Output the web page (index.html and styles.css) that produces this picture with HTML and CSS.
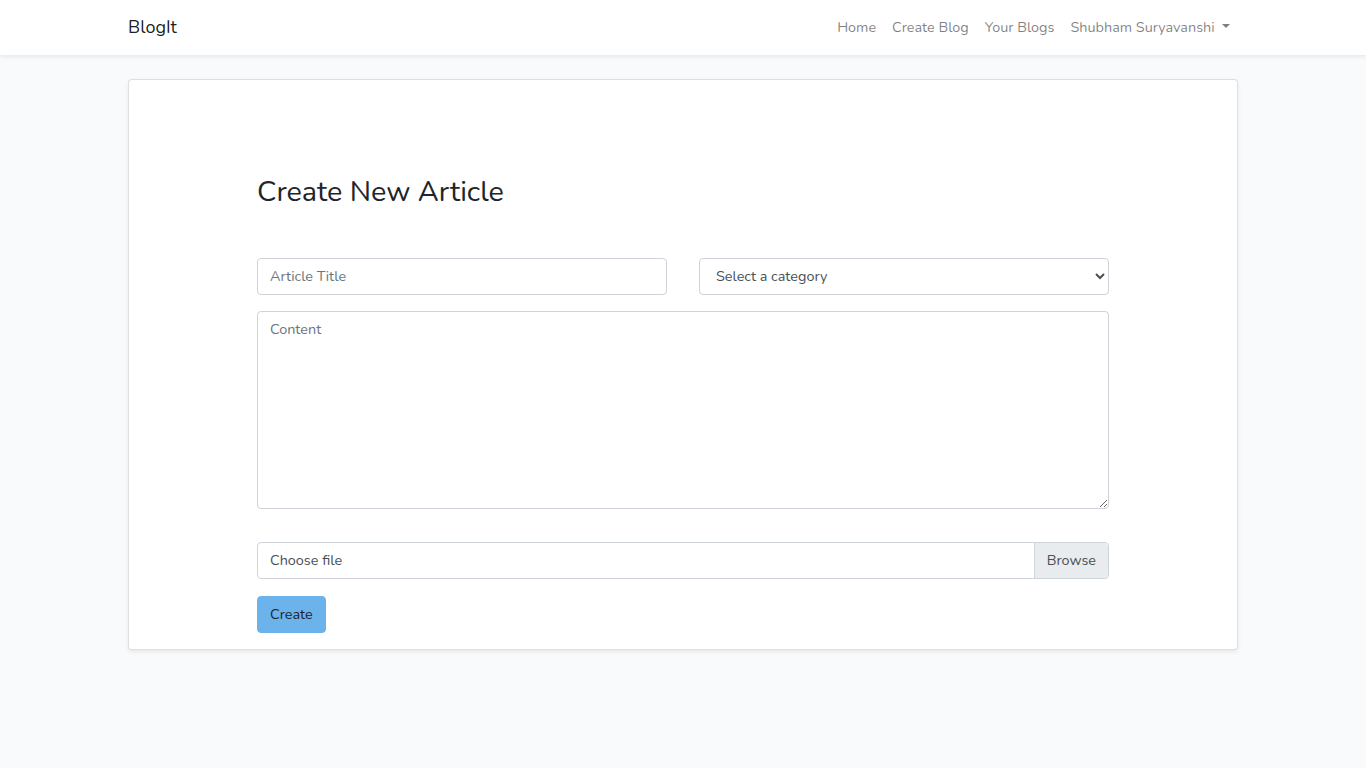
FILE: index.html
```html
<!DOCTYPE html>
<html lang="en">
<head>
<meta charset="utf-8">
<title>BlogIt</title>
<link rel="stylesheet" href="styles.css">
</head>
<body>
<nav class="navbar">
  <div class="container nav-inner">
    <a class="brand" href="#">BlogIt</a>
    <ul class="nav-links">
      <li><a href="#">Home</a></li>
      <li><a href="#">Create Blog</a></li>
      <li><a href="#">Your Blogs</a></li>
      <li><a href="#" class="dropdown-toggle">Shubham Suryavanshi <span class="caret"></span></a></li>
    </ul>
  </div>
</nav>
<main class="main">
  <div class="container">
    <div class="card">
      <div class="card-body">
        <h2 class="title">Create New Article</h2>
        <form class="form">
          <div class="form-row">
            <input class="form-control" type="text" placeholder="Article Title">
            <select class="form-control select">
              <option>Select a category</option>
            </select>
          </div>
          <textarea class="form-control textarea" rows="8" placeholder="Content"></textarea>
          <div class="custom-file">
            <span class="file-label">Choose file</span>
            <span class="file-browse">Browse</span>
          </div>
          <button type="button" class="btn">Create</button>
        </form>
      </div>
    </div>
  </div>
</main>
</body>
</html>
```
FILE: styles.css
```css
* { box-sizing: border-box; }
html, body { margin: 0; }
body {
  background: #f8fafc;
  font-family: "Nunito", "Lato", sans-serif;
  font-size: 14.4px;
  line-height: 1.6;
  color: #212529;
}
.container {
  width: 1110px;
  margin: 0 auto;
}
.navbar {
  background: #fff;
  box-shadow: 0 2px 4px rgba(0,0,0,.075);
  padding: 8px 0;
}
.nav-inner {
  display: flex;
  align-items: center;
  justify-content: space-between;
}
.brand {
  font-size: 18px;
  line-height: 28.8px;
  padding: 5px 0;
  color: rgba(0,0,0,.9);
  text-decoration: none;
  font-weight: 400;
}
.nav-links {
  display: flex;
  list-style: none;
  margin: 0;
  padding: 0;
}
.nav-links a {
  display: block;
  padding: 8px 8px;
  color: rgba(0,0,0,.5);
  text-decoration: none;
}
.dropdown-toggle::after {
  content: "";
  display: inline-block;
  margin-left: .255em;
  vertical-align: .255em;
  border-top: .3em solid;
  border-right: .3em solid transparent;
  border-left: .3em solid transparent;
  border-bottom: 0;
}
.main {
  padding: 24px 0;
}
.card {
  background: #fff;
  border: 1px solid rgba(0,0,0,.125);
  border-radius: 4px;
  box-shadow: 0 2px 4px rgba(0,0,0,.075);
}
.card-body {
  padding: 95px 128px 16px;
}
.title {
  margin: 0 0 48px;
  font-size: 28.8px;
  line-height: 1.2;
  font-weight: 400;
  color: #212529;
}
.form {
  display: flex;
  flex-direction: column;
  align-items: flex-start;
}
.form-row {
  display: grid;
  grid-template-columns: 1fr 1fr;
  column-gap: 32px;
  width: 100%;
  margin-bottom: 16px;
}
.form-control {
  display: block;
  width: 100%;
  height: 37px;
  padding: 6px 12px;
  font-family: inherit;
  font-size: 14.4px;
  line-height: 1.6;
  color: #495057;
  background: #fff;
  border: 1px solid #ced4da;
  border-radius: 4px;
}
.form-control::placeholder { color: #6c757d; opacity: 1; }
.select { color: #495057; }
.textarea {
  height: 198px;
  resize: vertical;
  margin-bottom: 33px;
}
.custom-file {
  display: flex;
  width: 100%;
  height: 37px;
  border: 1px solid #ced4da;
  border-radius: 4px;
  color: #495057;
  overflow: hidden;
  margin-bottom: 17px;
}
.file-label {
  flex: 1;
  padding: 6px 12px;
}
.file-browse {
  padding: 6px 12px;
  background: #e9ecef;
  border-left: 1px solid #ced4da;
}
.btn {
  height: 37px;
  padding: 6px 12px;
  font-family: inherit;
  font-size: 14.4px;
  line-height: 1.6;
  color: #212529;
  background: #6cb2eb;
  border: 1px solid #6cb2eb;
  border-radius: 4px;
}
```
